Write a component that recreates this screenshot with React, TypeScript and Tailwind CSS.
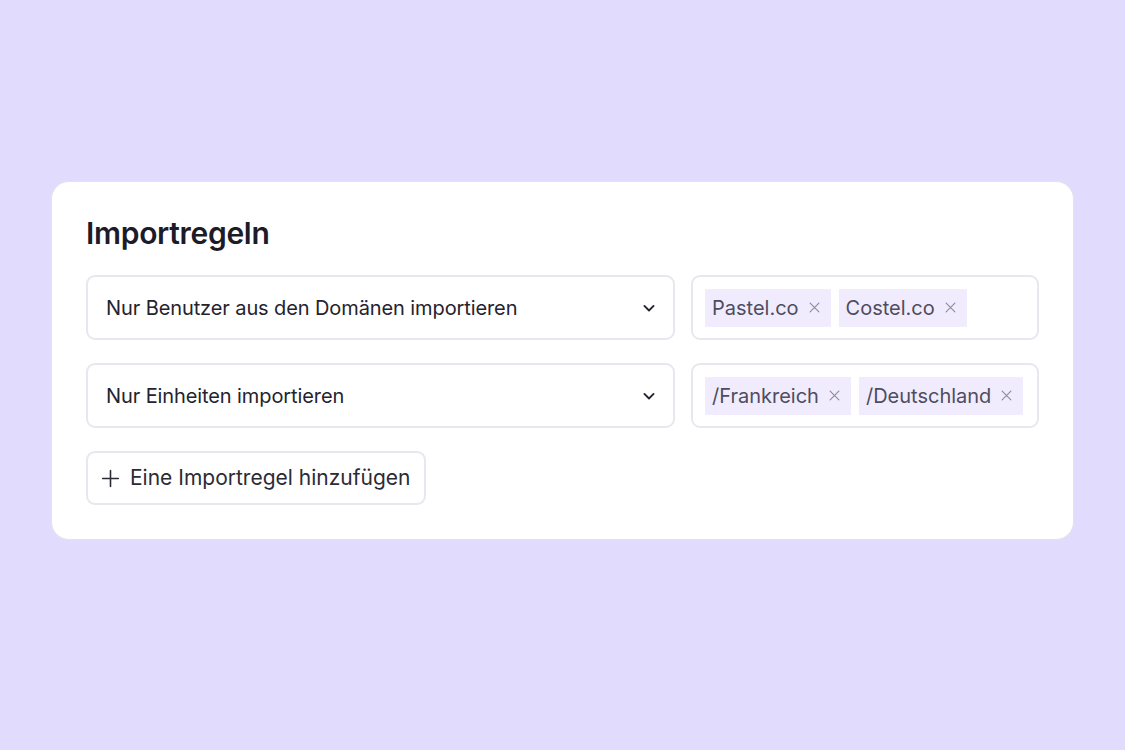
import React from "react";

const FONT = { fontFamily: "Inter, 'Noto Sans', sans-serif" };

type Rule = { label: string; tags: string[] };

const rules: Rule[] = [
  { label: "Nur Benutzer aus den Domänen importieren", tags: ["Pastel.co", "Costel.co"] },
  { label: "Nur Einheiten importieren", tags: ["/Frankreich", "/Deutschland"] },
];

function Chevron() {
  return (
    <svg viewBox="0 0 24 24" className="h-5 w-5 text-[#222230]" fill="none" stroke="currentColor" strokeWidth="2.2" strokeLinecap="round" strokeLinejoin="round">
      <path d="M6.5 9.5l5.5 5.5 5.5-5.5" />
    </svg>
  );
}

function Cross() {
  return (
    <svg viewBox="0 0 24 24" className="h-[15px] w-[15px] text-[#8d8a9c]" fill="none" stroke="currentColor" strokeWidth="1.8" strokeLinecap="round">
      <path d="M5 5l14 14M19 5L5 19" />
    </svg>
  );
}

function Plus() {
  return (
    <svg viewBox="0 0 24 24" className="h-[21px] w-[21px] text-[#2b2b35]" fill="none" stroke="currentColor" strokeWidth="1.8" strokeLinecap="round">
      <path d="M12 3v18M3 12h18" />
    </svg>
  );
}

function Tag({ text }: { text: string }) {
  return (
    <span className="flex h-[38px] items-center gap-[8px] bg-[#f0ecfe] pl-[7px] pr-[9px] text-[20px] text-[#4f4c5e]">
      {text}
      <Cross />
    </span>
  );
}

export default function App() {
  return (
    <div className="flex h-[750px] w-full items-start justify-center bg-[#e1dcfe] pt-[181px]" style={FONT}>
      <div className="w-[1023px] rounded-[18px] border border-[#e4e2ea] bg-white px-[34px] pb-[34px] pt-[36px]">
        <h1 className="text-[30px] font-semibold leading-none tracking-[-0.3px] text-[#1c1b29]">Importregeln</h1>

        <div className="mt-[27px] flex flex-col gap-[23px]">
          {rules.map((r) => (
            <div key={r.label} className="flex gap-[16px]">
              <div className="flex h-[65px] w-[589px] items-center justify-between rounded-[9px] border-2 border-[#e8e7ee] pl-[18px] pr-[14px]">
                <span className="text-[20px] tracking-[-0.1px] text-[#24232e]">{r.label}</span>
                <Chevron />
              </div>
              <div className="flex h-[65px] flex-1 items-center gap-[8px] rounded-[9px] border-2 border-[#e8e7ee] px-[12px]">
                {r.tags.map((t) => (
                  <Tag key={t} text={t} />
                ))}
              </div>
            </div>
          ))}
        </div>

        <button className="mt-[23px] flex h-[54px] items-center gap-[9px] rounded-[9px] border-2 border-[#e8e7ee] bg-white pl-[12px] pr-[14px] text-[21px] text-[#2b2b35]">
          <Plus />
          Eine Importregel hinzufügen
        </button>
      </div>
    </div>
  );
}
